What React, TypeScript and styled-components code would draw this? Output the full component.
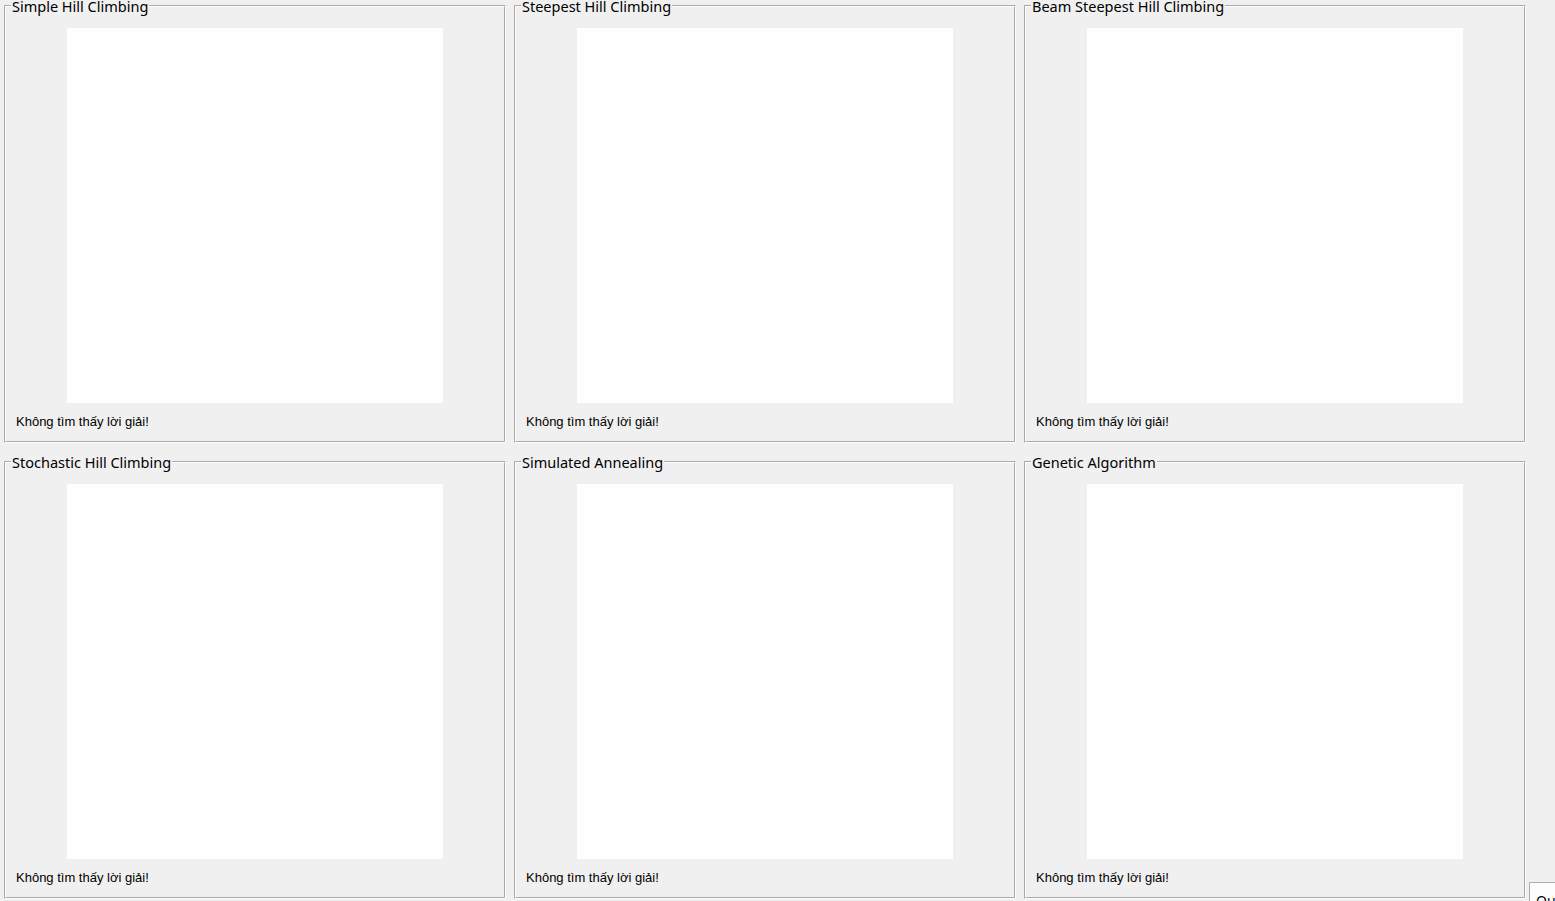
import React from "react";
import styled, { createGlobalStyle } from "styled-components";

const GlobalStyle = createGlobalStyle`
  html, body {
    margin: 0;
    padding: 0;
    background: #f0f0f0;
    overflow: hidden;
  }
  #root {
    height: 901px;
    overflow: hidden;
  }
`;

const Window = styled.div`
  display: flex;
  height: 901px;
  background: #f0f0f0;
  font-family: "Noto Sans", "Open Sans", sans-serif;
  color: #000;
`;

const Board = styled.div`
  display: grid;
  grid-template-columns: repeat(3, 502px);
  grid-auto-rows: 443px;
  column-gap: 8px;
  row-gap: 13px;
  padding: 0 0 0 4px;
  width: 1522px;
  flex-shrink: 0;
`;

const Frame = styled.fieldset`
  box-sizing: border-box;
  margin: 0;
  padding: 0;
  min-width: 0;
  border: 2px groove #ffffff;
  display: flex;
  flex-direction: column;
  align-items: center;
`;

const Title = styled.legend`
  margin-left: 5px;
  padding: 0 1px;
  font-size: 14.5px;
  line-height: 12px;
  color: #000;
`;

const Canvas = styled.div`
  width: 376px;
  height: 375px;
  margin-top: 16px;
  background: #fefefe;
`;

const Status = styled.div`
  align-self: stretch;
  padding-left: 10px;
  margin-top: 11px;
  font-family: "Liberation Sans", Arial, sans-serif;
  font-size: 13px;
  line-height: 15px;
`;

const Side = styled.div`
  flex: 1;
  padding: 882px 0 0 3px;
`;

const QuitButton = styled.button`
  box-sizing: border-box;
  width: 60px;
  height: 30px;
  background: #fdfdfd;
  border: 1px solid #adadad;
  font-family: "Noto Sans", sans-serif;
  font-size: 14px;
  padding: 6px 6px 0;
  text-align: left;
`;

const algorithms = [
  "Simple Hill Climbing",
  "Steepest Hill Climbing",
  "Beam Steepest Hill Climbing",
  "Stochastic Hill Climbing",
  "Simulated Annealing",
  "Genetic Algorithm",
];

export default function App() {
  return (
    <>
      <GlobalStyle />
      <Window>
        <Board>
          {algorithms.map((name) => (
            <Frame key={name}>
              <Title>{name}</Title>
              <Canvas />
              <Status>Không tìm thấy lời giải!</Status>
            </Frame>
          ))}
        </Board>
        <Side>
          <QuitButton>Quit</QuitButton>
        </Side>
      </Window>
    </>
  );
}
